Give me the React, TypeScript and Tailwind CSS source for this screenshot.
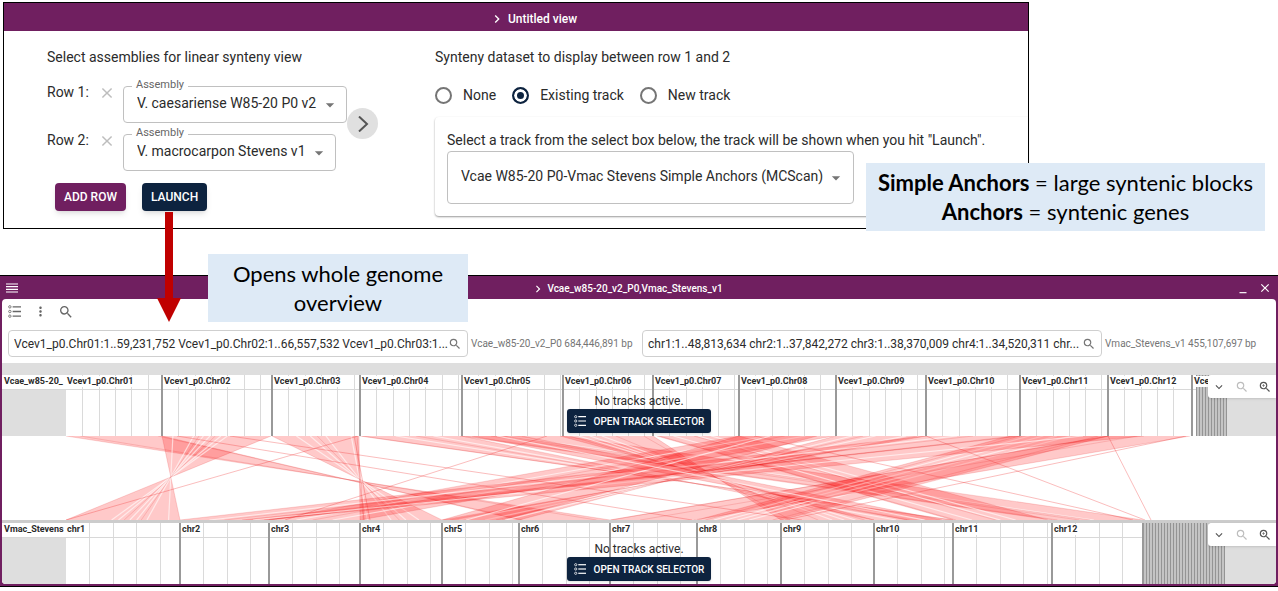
import React from "react";
import {
  MdArrowDropDown,
  MdChevronRight,
  MdClose,
  MdExpandMore,
  MdMinimize,
  MdMoreVert,
  MdSearch,
  MdZoomIn,
} from "react-icons/md";

type Chromosome = { name: string; start: number; end: number };

const topChromosomes: Chromosome[] = [
  { name: "Vcev1_p0.Chr01", start: 64, end: 160 },
  { name: "Vcev1_p0.Chr02", start: 160, end: 270 },
  { name: "Vcev1_p0.Chr03", start: 270, end: 358 },
  { name: "Vcev1_p0.Chr04", start: 358, end: 460 },
  { name: "Vcev1_p0.Chr05", start: 460, end: 561 },
  { name: "Vcev1_p0.Chr06", start: 561, end: 651 },
  { name: "Vcev1_p0.Chr07", start: 651, end: 737 },
  { name: "Vcev1_p0.Chr08", start: 737, end: 834 },
  { name: "Vcev1_p0.Chr09", start: 834, end: 924 },
  { name: "Vcev1_p0.Chr10", start: 924, end: 1018 },
  { name: "Vcev1_p0.Chr11", start: 1018, end: 1106 },
  { name: "Vcev1_p0.Chr12", start: 1106, end: 1190 },
];

const bottomChromosomes: Chromosome[] = [
  { name: "chr1", start: 64, end: 178 },
  { name: "chr2", start: 178, end: 267 },
  { name: "chr3", start: 267, end: 358 },
  { name: "chr4", start: 358, end: 440 },
  { name: "chr5", start: 440, end: 517 },
  { name: "chr6", start: 517, end: 608 },
  { name: "chr7", start: 608, end: 695 },
  { name: "chr8", start: 695, end: 779 },
  { name: "chr9", start: 779, end: 872 },
  { name: "chr10", start: 872, end: 951 },
  { name: "chr11", start: 951, end: 1050 },
  { name: "chr12", start: 1050, end: 1141 },
];

// Each block joins the top interval [t1, t2] to the bottom interval [b1, b2];
// b1 > b2 marks an inverted block. Gaps and seams are fractions along the block.
type Block = { t1: number; t2: number; b1: number; b2: number; gaps: number[]; seams: number[] };

const blocks: Block[] = [
  { t1: 64, t2: 160, b1: 608, b2: 517, gaps: [], seams: [0.15, 0.96] },
  { t1: 160, t2: 269, b1: 178, b2: 64, gaps: [0.1, 0.29, 0.38, 0.44, 0.54, 0.6], seams: [0.34, 0.49] },
  { t1: 270, t2: 357, b1: 440, b2: 358, gaps: [0.28, 0.44, 0.62, 0.91], seams: [0.52, 0.96] },
  { t1: 358, t2: 460, b1: 951, b2: 872, gaps: [0.35, 0.72], seams: [0.02, 0.55] },
  { t1: 458, t2: 561, b1: 1050, b2: 1141, gaps: [0.46], seams: [0.06, 0.3, 0.42] },
  { t1: 558, t2: 651, b1: 872, b2: 779, gaps: [0.2, 0.32, 0.45], seams: [0.1, 0.6, 0.9] },
  { t1: 655, t2: 737, b1: 951, b2: 1046, gaps: [0.2, 0.5, 0.66], seams: [0.03, 0.45] },
  { t1: 737, t2: 832, b1: 267, b2: 358, gaps: [0.3, 0.7], seams: [0.48] },
  { t1: 834, t2: 924, b1: 517, b2: 440, gaps: [0.18, 0.44, 0.78], seams: [0.3, 0.9] },
  { t1: 924, t2: 1018, b1: 178, b2: 267, gaps: [0.33], seams: [0.5, 0.95] },
  { t1: 1008, t2: 1106, b1: 695, b2: 779, gaps: [0.2, 0.34, 0.48, 0.62], seams: [0.1, 0.9] },
  { t1: 1106, t2: 1188, b1: 608, b2: 692, gaps: [], seams: [0.01, 0.36] },
  { t1: 1020, t2: 1142, b1: 240, b2: 262, gaps: [0.5], seams: [] },
  { t1: 737, t2: 815, b1: 440, b2: 500, gaps: [0.4], seams: [] },
  { t1: 470, t2: 520, b1: 905, b2: 940, gaps: [0.5], seams: [] },
];

const strayLinks: [number, number][] = [
  [356, 64],
  [228, 800],
  [545, 283],
  [924, 1143],
  [1106, 1149],
  [752, 1131],
  [1184, 783],
  [175, 690],
  [355, 362],
  [352, 368],
];

const BAND = 84;

function lerp(a: number, b: number, f: number) {
  return a + (b - a) * f;
}

function SyntenyBand() {
  return (
    <svg className="block h-[84px] w-full" role="img" aria-label="Synteny between assemblies">
      {blocks.map((k, i) => (
        <g key={i}>
          <polygon
            points={`${k.t1},0 ${k.t2},0 ${k.b2},${BAND} ${k.b1},${BAND}`}
            fill="#ff0000"
            fillOpacity={0.21}
          />
          {k.gaps.map((f) => (
            <line
              key={f}
              x1={lerp(k.t1, k.t2, f)}
              y1={0}
              x2={lerp(k.b1, k.b2, f)}
              y2={BAND}
              stroke="#ffffff"
              strokeOpacity={0.6}
              strokeWidth={1.2}
            />
          ))}
          {[0, ...k.seams, 1].map((f) => (
            <line
              key={f}
              x1={lerp(k.t1, k.t2, f)}
              y1={0}
              x2={lerp(k.b1, k.b2, f)}
              y2={BAND}
              stroke="#e02020"
              strokeOpacity={0.22}
              strokeWidth={0.8}
            />
          ))}
        </g>
      ))}
      {strayLinks.map(([a, b]) => (
        <line key={a + "-" + b} x1={a} y1={0} x2={b} y2={BAND} stroke="#f03030" strokeOpacity={0.4} strokeWidth={0.8} />
      ))}
    </svg>
  );
}

type TrackProps = {
  assembly: string;
  chromosomes: Chromosome[];
  step: number;
  scaffolds: [number, number];
  extraLabel?: string;
};

function ticks(c: Chromosome, step: number) {
  const out: number[] = [];
  for (let x = c.start + step; x < c.end - 3; x += step) out.push(Math.round(x));
  return out;
}

function GenomeRow({ assembly, chromosomes, step, scaffolds, extraLabel }: TrackProps) {
  const [s0, s1] = scaffolds;
  const bars: number[] = [];
  for (let x = s0; x < s1; x += 3) bars.push(x);
  const last = chromosomes[chromosomes.length - 1].end;
  return (
    <div className="relative">
      <svg className="block h-[61px] w-full bg-white">
        <rect x={0} y={14} width={64} height={47} fill="#dedede" />
        <rect x={s1} y={0} width="100%" height={61} fill="#dedede" />
        {chromosomes.map((c) => (
          <g key={c.name}>
            {ticks(c, step).map((x) => (
              <rect key={x} x={x} y={0} width={1} height={61} fill="#dadada" />
            ))}
          </g>
        ))}
        <rect x={0} y={14} width={s0} height={1} fill="#d8d8d8" />
        <rect x={s0} y={0} width={s1 - s0} height={61} fill="#c4c4c4" />
        {bars.map((x) => (
          <rect key={x} x={x} y={0} width={1} height={61} fill="#949494" />
        ))}
        {chromosomes.slice(1).map((c) => (
          <rect key={c.name} x={c.start - 1} y={0} width={2} height={61} fill="#999999" />
        ))}
        <rect x={last - 1} y={0} width={2} height={61} fill="#999999" />
        <rect x={0} y={1} width={64} height={12} fill="#ffffff" />
        <g fontFamily="Roboto, sans-serif" fontSize={9} fontWeight={700} fill="#2b2b2b">
          <text x={2} y={9}>
            {assembly}
          </text>
          {chromosomes.map((c) => (
            <g key={c.name}>
              <rect x={c.start + 1} y={1} width={c.name.length * 5} height={11} fill="#ffffff" />
              <text x={c.start + (c.start === 64 ? 1 : 2)} y={9}>
                {c.name}
              </text>
            </g>
          ))}
          {extraLabel && (
            <g>
              <rect x={last + 1} y={1} width={20} height={11} fill="#ffffff" />
              <text x={last + 2} y={9}>
                {extraLabel}
              </text>
            </g>
          )}
        </g>
      </svg>
      <div className="absolute inset-x-0 top-4 flex flex-col items-center">
        <p className="pt-[2px] text-[12px] leading-4 text-[#2b2b2b]">No tracks active.</p>
        <button
          type="button"
          className="flex h-6 items-center gap-2 rounded-[3px] bg-[#0d233f] px-[7px] text-[10px] font-medium text-white shadow"
        >
          <ListIcon className="size-3" />
          OPEN TRACK SELECTOR
        </button>
      </div>
      <div className="absolute top-0 right-0 flex h-[23px] w-[68px] items-center justify-around rounded-l-[3px] bg-white text-[#555] shadow">
        <button type="button" aria-label="More options">
          <MdExpandMore className="size-[14px]" />
        </button>
        <button type="button" aria-label="Zoom out" className="text-[#bdbdbd]">
          <MdSearch className="size-[14px]" />
        </button>
        <button type="button" aria-label="Zoom in">
          <MdZoomIn className="size-[14px]" />
        </button>
      </div>
    </div>
  );
}

function ListIcon({ className }: { className: string }) {
  return (
    <svg viewBox="0 0 14 14" className={className} fill="none" stroke="currentColor" aria-hidden="true">
      {[2, 7, 12].map((y) => (
        <g key={y}>
          <circle cx={2} cy={y} r={1.3} strokeWidth={0.9} />
          <path d={`M5 ${y}H14`} strokeWidth={1.4} />
        </g>
      ))}
    </svg>
  );
}

function AssemblyRow({ row, value }: { row: number; value: string }) {
  const id = `assembly-${row}`;
  return (
    <div className="flex h-[37px] items-start">
      <span className="w-[53px] shrink-0 leading-[13px]">Row {row}:</span>
      <button type="button" aria-label={`Remove row ${row}`} className="mr-[9px] shrink-0 text-[#bdbdbd]">
        <MdClose className="size-[14px] scale-125" />
      </button>
      <div className="relative shrink-0">
        <label htmlFor={id} className="absolute -top-2 left-[9px] bg-white px-1 text-[11px] leading-[14px] text-[#666]">
          Assembly
        </label>
        <select
          id={id}
          className="h-[37px] appearance-none rounded-[4px] border border-[#c0c0c0] bg-transparent pr-[29px] pb-[2px] pl-[13px] text-[14px] text-[#2b2b2b]"
        >
          <option>{value}</option>
        </select>
        <MdArrowDropDown className="pointer-events-none absolute top-[9px] right-[7px] size-[20px] text-[#757575]" />
      </div>
    </div>
  );
}

function TrackRadio({ label, checked }: { label: string; checked?: boolean }) {
  return (
    <label className="flex items-center gap-[11px]">
      <input
        type="radio"
        name="track-source"
        defaultChecked={checked}
        className="size-[17px] appearance-none rounded-full border-2 border-[#757575] checked:border-[#0d233f] checked:bg-[#0d233f] checked:shadow-[inset_0_0_0_3px_white]"
      />
      {label}
    </label>
  );
}

function LocationBox({ label, value, info }: { label: string; value: string; info: string }) {
  return (
    <div className="flex flex-1 items-center">
      <div className="flex h-[27px] flex-1 items-center rounded-[4px] border border-[#cfcfcf] pr-[5px] pl-[5px]">
        <input
          aria-label={label}
          defaultValue={value}
          className="min-w-0 flex-1 bg-transparent text-[12px] text-[#2b2b2b] outline-none"
        />
        <button type="button" aria-label={`Search ${label}`} className="text-[#757575]">
          <MdSearch className="size-[14px]" />
        </button>
      </div>
      <span className="w-[174px] pl-[3px] text-[10px] whitespace-nowrap text-[#757575]">{info}</span>
    </div>
  );
}

export default function App() {
  return (
    <main className="relative bg-white pt-[2px] font-[Roboto,sans-serif] text-[14px] text-[#2b2b2b]">
      <section className="mr-[249px] ml-[3px] h-[227px] border border-black">
        <header className="flex h-7 items-center justify-center gap-[3px] bg-[#701f60] pt-[3px] pl-[34px] text-[12px] font-medium text-white">
          <MdChevronRight className="size-4" />
          <h1>Untitled view</h1>
        </header>
        <div className="flex pt-4 pl-[43px]">
          <div className="w-[388px]">
            <h2 className="leading-5">Select assemblies for linear synteny view</h2>
            <div className="mt-[19px] flex items-start">
              <div className="flex w-[300px] flex-col gap-[11px]">
                <AssemblyRow row={1} value="V. caesariense W85-20 P0 v2" />
                <AssemblyRow row={2} value="V. macrocarpon Stevens v1" />
              </div>
              <button
                type="button"
                aria-label="Select synteny dataset"
                className="mt-[22px] flex size-[31px] items-center justify-center rounded-full bg-[#e0e0e0] text-[#555]"
              >
                <svg viewBox="0 0 16 16" className="size-4" fill="none" stroke="currentColor" strokeWidth={2}>
                  <path d="M4 .5 12 8 4 15.5" />
                </svg>
              </button>
            </div>
            <div className="mt-3 ml-2 flex gap-4 text-[12px] font-medium text-white">
              <button type="button" className="h-7 rounded-[4px] bg-[#701f60] px-[9px] pb-px shadow-md">
                ADD ROW
              </button>
              <button type="button" className="h-7 rounded-[4px] bg-[#0d233f] px-[9px] pb-px shadow-md">
                LAUNCH
              </button>
            </div>
          </div>
          <div className="flex-1">
            <h2 className="leading-5">Synteny dataset to display between row 1 and 2</h2>
            <div className="mt-[15px] flex h-[26px] items-center gap-4">
              <TrackRadio label="None" />
              <TrackRadio label="Existing track" checked />
              <TrackRadio label="New track" />
            </div>
            <div className="mt-[9px] rounded-l-[4px] px-3 pt-[13px] pb-3 shadow-[0_1px_2px_rgba(0,0,0,0.4)]">
              <label htmlFor="track" className="block leading-5">
                Select a track from the select box below, the track will be shown when you hit "Launch".
              </label>
              <div className="relative mt-px w-fit">
                <select
                  id="track"
                  className="block h-[53px] appearance-none rounded-[4px] border border-[#c0c0c0] bg-transparent pr-[29px] pb-[2px] pl-[13px]"
                >
                  <option>Vcae W85-20 P0-Vmac Stevens Simple Anchors (MCScan)</option>
                </select>
                <MdArrowDropDown className="pointer-events-none absolute top-[17px] right-2 size-[20px] text-[#757575]" />
              </div>
            </div>
          </div>
        </div>
      </section>

      <section className="mt-[46px] border-y border-black bg-[#701f60] px-[2px] pb-[2px]">
        <header className="flex h-[23px] items-center px-1 text-white">
          <button type="button" aria-label="View menu">
            <svg viewBox="0 0 12 10" className="h-[10px] w-3" stroke="currentColor" strokeWidth={1.2}>
              <path d="M0 1H12M0 3.7H12M0 6.4H12M0 9H12" />
            </svg>
          </button>
          <div className="flex flex-1 items-center justify-center gap-[2px] pt-[2px] text-[10px] font-medium">
            <MdChevronRight className="size-[14px]" />
            <h2>Vcae_w85-20_v2_P0,Vmac_Stevens_v1</h2>
          </div>
          <button type="button" aria-label="Minimize" className="mr-2">
            <MdMinimize className="size-[14px]" />
          </button>
          <button type="button" aria-label="Close">
            <MdClose className="size-[14px]" />
          </button>
        </header>
        <div className="overflow-hidden rounded-[4px] bg-white">
          <div className="flex h-[25px] items-center gap-3 pl-[6px] text-[#666]">
            <button type="button" aria-label="Open track selector">
              <ListIcon className="size-[13px]" />
            </button>
            <button type="button" aria-label="More">
              <MdMoreVert className="size-[15px]" />
            </button>
            <button type="button" aria-label="Search" className="-ml-0.5">
              <MdSearch className="size-4" />
            </button>
          </div>
          <div className="flex py-[6px] pl-[6px]">
            <LocationBox
              label="Vcae_w85-20_v2_P0 location"
              value="Vcev1_p0.Chr01:1..59,231,752 Vcev1_p0.Chr02:1..66,557,532 Vcev1_p0.Chr03:1..."
              info="Vcae_w85-20_v2_P0 684,446,891 bp"
            />
            <LocationBox
              label="Vmac_Stevens_v1 location"
              value="chr1:1..48,813,634 chr2:1..37,842,272 chr3:1..38,370,009 chr4:1..34,520,311 chr..."
              info="Vmac_Stevens_v1 455,107,697 bp"
            />
          </div>
          <div className="h-3 bg-[#dedede]" />
          <GenomeRow
            assembly="Vcae_w85-20_"
            chromosomes={topChromosomes}
            step={16.3}
            scaffolds={[1194, 1225]}
            extraLabel="Vcev"
          />
          <SyntenyBand />
          <div className="h-[3px] bg-[#cccccc]" />
          <GenomeRow assembly="Vmac_Stevens" chromosomes={bottomChromosomes} step={23.4} scaffolds={[1141, 1223]} />
        </div>
      </section>

      <p className="absolute top-[163px] right-[13px] w-[399px] bg-[#deeaf6] py-[5px] text-center font-[Lato,sans-serif] text-[22px] leading-[29px] text-black">
        <strong>Simple Anchors</strong> = large syntenic blocks
        <br />
        <strong>Anchors</strong> = syntenic genes
      </p>
      <p className="absolute top-[254px] left-[208px] w-[260px] bg-[#deeaf6] px-4 py-[5px] text-center font-[Lato,sans-serif] text-[22px] leading-[29px] text-black">
        Opens whole genome overview
      </p>
      <svg className="absolute top-[212px] left-[157px] h-[110px] w-6" viewBox="0 0 24 110" fill="#c00000" aria-hidden="true">
        <path d="M8 0H16V86H24L12 110 0 86H8Z" />
      </svg>
    </main>
  );
}
